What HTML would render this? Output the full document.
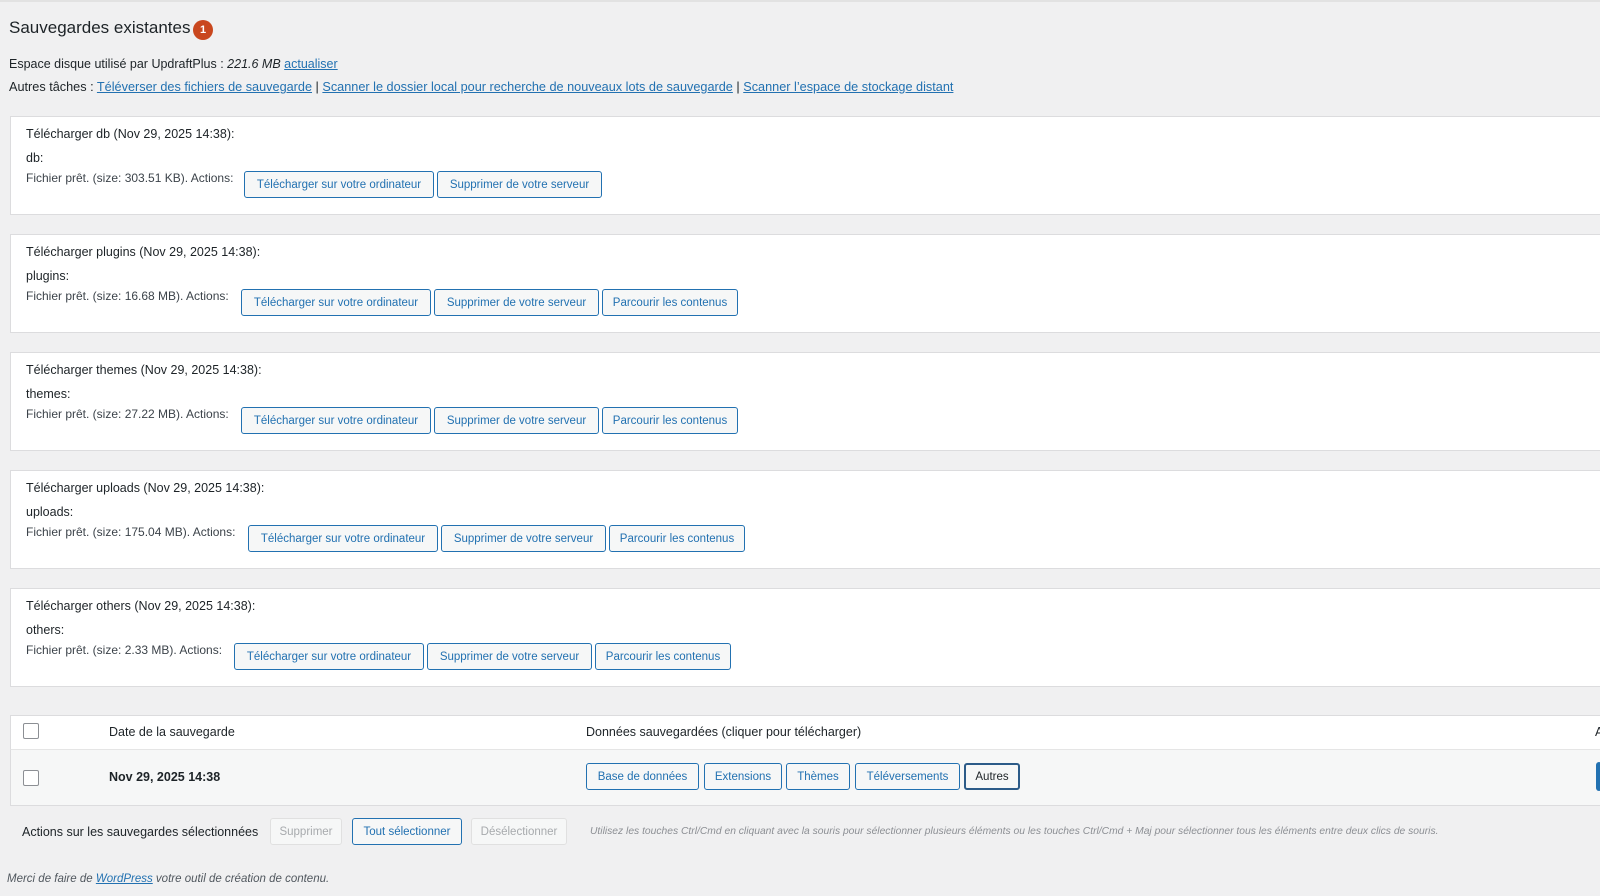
<!DOCTYPE html>
<html><head><meta charset="utf-8"><style>
body{margin:0;width:1600px;height:896px;background:#f0f0f1;font-family:"Liberation Sans",sans-serif;color:#1d2327;font-size:12.5px;position:relative;overflow:hidden}
.a{position:absolute;white-space:nowrap}
a{color:#2271b1;text-decoration:underline}
.box{position:absolute;left:10px;width:1600px;height:97px;background:#fff;border:1px solid #dcdcde}
.btn{position:absolute;height:27px;line-height:27px;border:1px solid #2271b1;border-radius:3px;background:#f6f7f7;color:#2271b1;font-size:11.5px;text-align:center;box-sizing:border-box}
.dis{border-color:#e0e0e0;color:#a7aaad;background:#f6f7f7}
.cb{position:absolute;width:14px;height:14px;border:1px solid #8c8f94;background:#fff;border-radius:2px}
.f{color:#3c434a;font-size:12px}
</style></head><body>
<div class="a" style="left:0;top:0;width:1600px;height:2px;background:#e2e2e2"></div>
<div class="a" style="left:9px;top:18px;font-size:17px;">Sauvegardes existantes</div>
<div class="a" style="left:193px;top:20px;width:20px;height:20px;border-radius:10px;background:#c9471e;color:#fff;font-size:11px;line-height:20px;text-align:center;font-weight:bold">1</div>
<div class="a" style="left:9px;top:57px">Espace disque utilisé par UpdraftPlus : <i>221.6 MB</i> <a>actualiser</a></div>
<div class="a" style="left:9px;top:80px;font-size:12.7px">Autres tâches : <a>Téléverser des fichiers de sauvegarde</a> | <a>Scanner le dossier local pour recherche de nouveaux lots de sauvegarde</a> | <a>Scanner l’espace de stockage distant</a></div>

<div class="box" style="top:116px"></div>
<div class="a" style="left:26px;top:127px">Télécharger db (Nov 29, 2025 14:38):</div>
<div class="a" style="left:26px;top:151px">db:</div>
<div class="a f" style="left:26px;top:171px">Fichier prêt. (size: 303.51 KB). Actions:</div>
<div class="btn" style="left:244px;top:171px;width:190px">Télécharger sur votre ordinateur</div>
<div class="btn" style="left:437px;top:171px;width:165px">Supprimer de votre serveur</div>

<div class="box" style="top:234px"></div>
<div class="a" style="left:26px;top:245px">Télécharger plugins (Nov 29, 2025 14:38):</div>
<div class="a" style="left:26px;top:269px">plugins:</div>
<div class="a f" style="left:26px;top:289px">Fichier prêt. (size: 16.68 MB). Actions:</div>
<div class="btn" style="left:241px;top:289px;width:190px">Télécharger sur votre ordinateur</div>
<div class="btn" style="left:434px;top:289px;width:165px">Supprimer de votre serveur</div>
<div class="btn" style="left:602px;top:289px;width:136px">Parcourir les contenus</div>

<div class="box" style="top:352px"></div>
<div class="a" style="left:26px;top:363px">Télécharger themes (Nov 29, 2025 14:38):</div>
<div class="a" style="left:26px;top:387px">themes:</div>
<div class="a f" style="left:26px;top:407px">Fichier prêt. (size: 27.22 MB). Actions:</div>
<div class="btn" style="left:241px;top:407px;width:190px">Télécharger sur votre ordinateur</div>
<div class="btn" style="left:434px;top:407px;width:165px">Supprimer de votre serveur</div>
<div class="btn" style="left:602px;top:407px;width:136px">Parcourir les contenus</div>

<div class="box" style="top:470px"></div>
<div class="a" style="left:26px;top:481px">Télécharger uploads (Nov 29, 2025 14:38):</div>
<div class="a" style="left:26px;top:505px">uploads:</div>
<div class="a f" style="left:26px;top:525px">Fichier prêt. (size: 175.04 MB). Actions:</div>
<div class="btn" style="left:248px;top:525px;width:190px">Télécharger sur votre ordinateur</div>
<div class="btn" style="left:441px;top:525px;width:165px">Supprimer de votre serveur</div>
<div class="btn" style="left:609px;top:525px;width:136px">Parcourir les contenus</div>

<div class="box" style="top:588px"></div>
<div class="a" style="left:26px;top:599px">Télécharger others (Nov 29, 2025 14:38):</div>
<div class="a" style="left:26px;top:623px">others:</div>
<div class="a f" style="left:26px;top:643px">Fichier prêt. (size: 2.33 MB). Actions:</div>
<div class="btn" style="left:234px;top:643px;width:190px">Télécharger sur votre ordinateur</div>
<div class="btn" style="left:427px;top:643px;width:165px">Supprimer de votre serveur</div>
<div class="btn" style="left:595px;top:643px;width:136px">Parcourir les contenus</div>

<div class="a" style="left:10px;top:715px;width:1600px;height:33px;background:#fff;border:1px solid #dcdcde"></div>
<div class="a" style="left:10px;top:749px;width:1600px;height:55px;background:#f6f7f7;border:1px solid #dcdcde;border-top:1px solid #e5e5e5"></div>
<div class="cb" style="left:23px;top:723px"></div>
<div class="a" style="left:109px;top:725px">Date de la sauvegarde</div>
<div class="a" style="left:586px;top:725px">Données sauvegardées (cliquer pour télécharger)</div>
<div class="a" style="left:1595px;top:725px">A</div>
<div class="cb" style="left:23px;top:770px"></div>
<div class="a" style="left:109px;top:770px;font-weight:bold">Nov 29, 2025 14:38</div>
<div class="btn" style="left:586px;top:763px;width:113px">Base de données</div>
<div class="btn" style="left:704px;top:763px;width:78px">Extensions</div>
<div class="btn" style="left:786px;top:763px;width:64px">Thèmes</div>
<div class="btn" style="left:855px;top:763px;width:105px">Téléversements</div>
<div class="btn" style="left:964px;top:763px;width:56px;border:2px solid #2c5b88;color:#1d2327;line-height:25px">Autres</div>
<div class="a" style="left:1596px;top:762px;width:6px;height:29px;background:#2271b1;border-radius:3px"></div>

<div class="a" style="left:22px;top:825px">Actions sur les sauvegardes sélectionnées</div>
<div class="btn dis" style="left:270px;top:818px;width:72px">Supprimer</div>
<div class="btn" style="left:352px;top:818px;width:110px">Tout sélectionner</div>
<div class="btn dis" style="left:471px;top:818px;width:96px">Désélectionner</div>
<div class="a" style="left:590px;top:826px;font-size:10.3px;font-style:italic;color:#8c8f94">Utilisez les touches Ctrl/Cmd en cliquant avec la souris pour sélectionner plusieurs éléments ou les touches Ctrl/Cmd + Maj pour sélectionner tous les éléments entre deux clics de souris.</div>
<div class="a" style="left:7px;top:873px;font-size:11.5px;font-style:italic;color:#50575e">Merci de faire de <a>WordPress</a> votre outil de création de contenu.</div>
</body></html>
